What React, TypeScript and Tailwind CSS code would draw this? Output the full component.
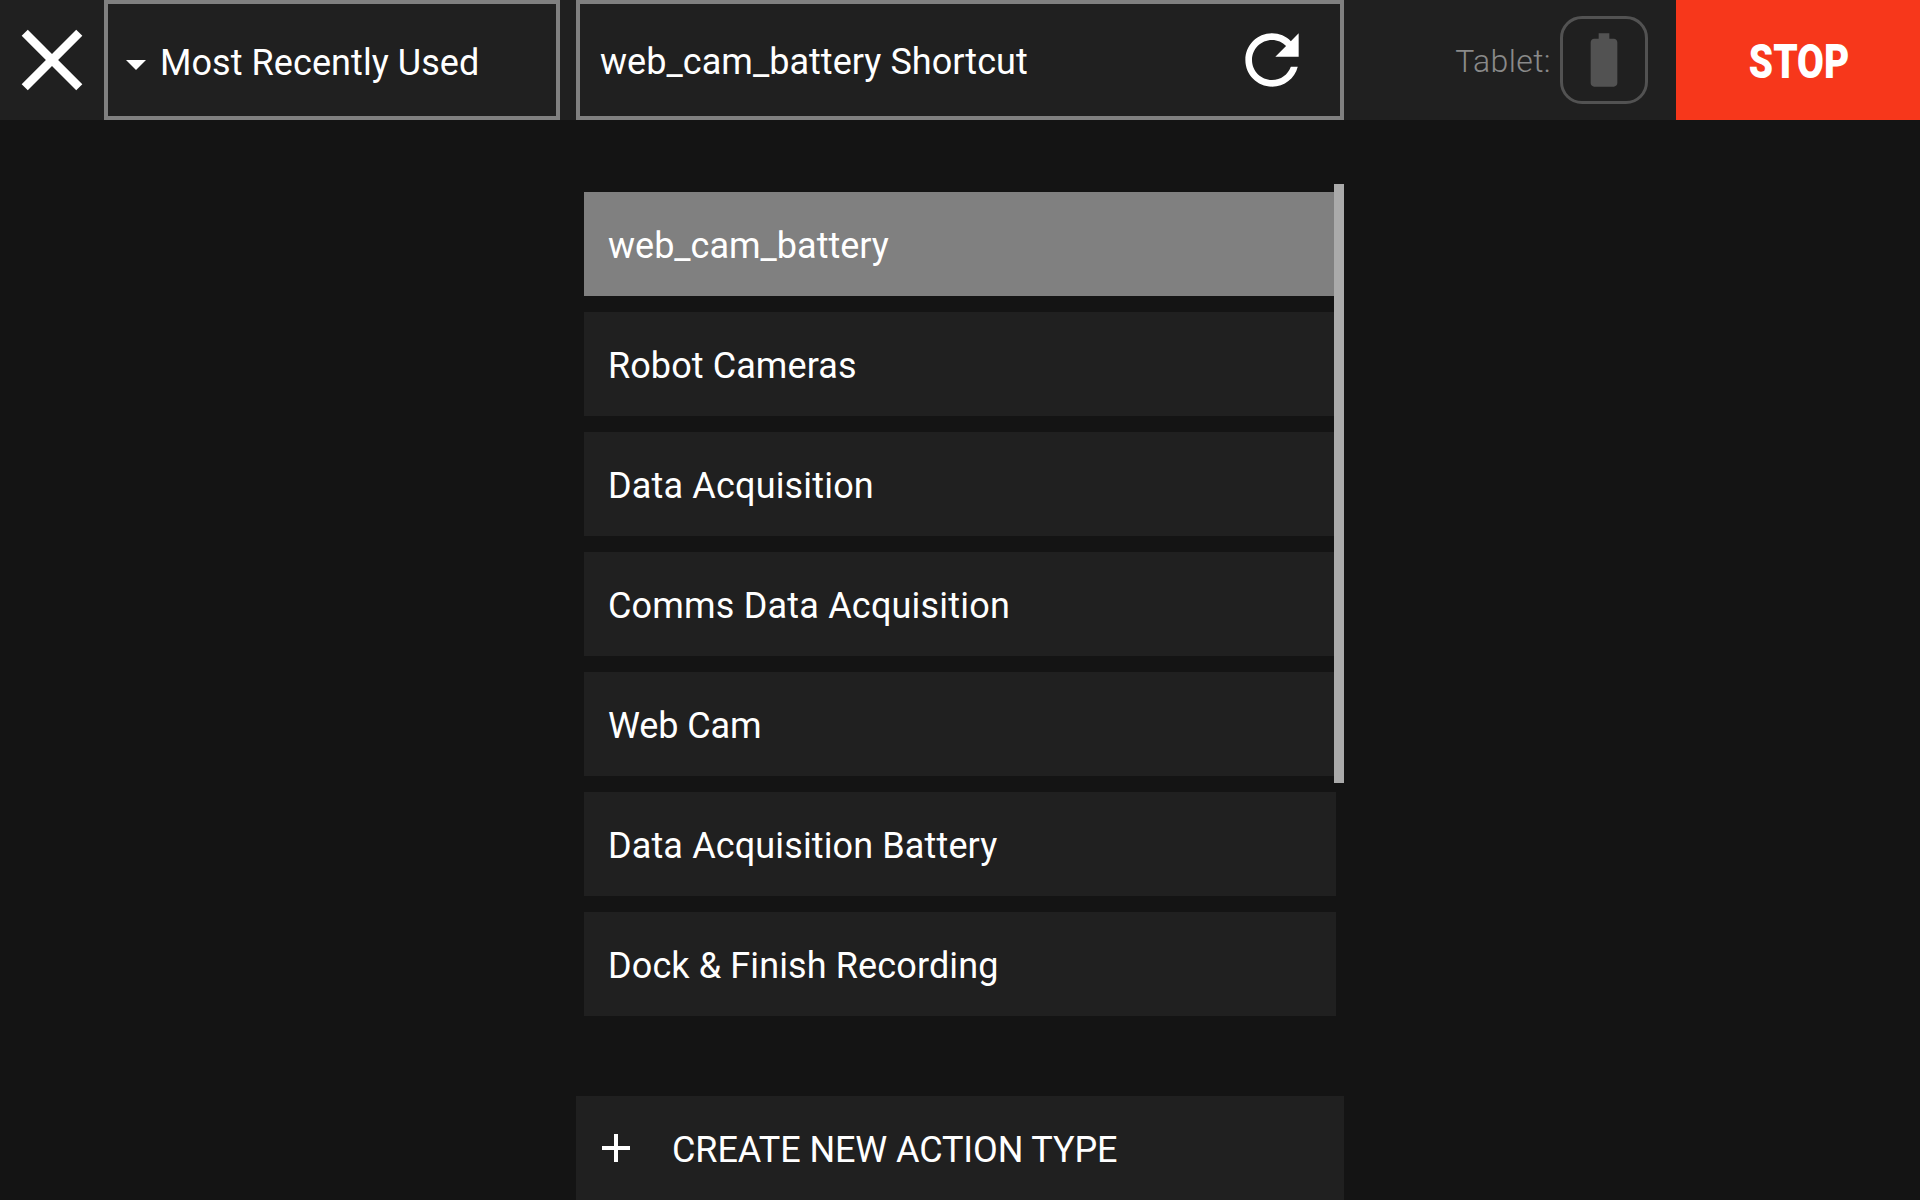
const actions = [
  { name: 'web_cam_battery', tracking: 'tracking-normal' },
  { name: 'Robot Cameras', tracking: 'tracking-[0.08px]' },
  { name: 'Data Acquisition', tracking: 'tracking-[0.17px]' },
  { name: 'Comms Data Acquisition', tracking: 'tracking-[0.19px]' },
  { name: 'Web Cam', tracking: 'tracking-[-0.1px]' },
  { name: 'Data Acquisition Battery', tracking: 'tracking-[0.13px]' },
  { name: 'Dock & Finish Recording', tracking: 'tracking-[0.12px]' },
];

function Icon({ d, className }: { d: string; className: string }) {
  return (
    <svg viewBox="0 0 24 24" fill="currentColor" className={className}>
      <path d={d} />
    </svg>
  );
}

function Header() {
  return (
    <header className="flex h-[120px] shrink-0 bg-[#202020]">
      <button className="flex w-[104px] items-center justify-center">
        <Icon
          className="size-[104px]"
          d="M19 6.41 17.59 5 12 10.59 6.41 5 5 6.41 10.59 12 5 17.59 6.41 19 12 13.41 17.59 19 19 17.59 13.41 12z"
        />
      </button>
      <button className="flex w-[456px] items-center border-4 border-[#808080] pl-1">
        <Icon className="mt-2 size-12" d="M7 10l5 5 5-5z" />
        <span className="mt-1.5 tracking-[0.07px] whitespace-nowrap">Most Recently Used</span>
      </button>
      <div className="ml-4 flex w-[768px] items-center justify-between border-4 border-[#808080] pr-7 pl-5">
        <span className="mt-1 tracking-[0.04px] whitespace-nowrap">web_cam_battery Shortcut</span>
        <Icon
          className="size-20"
          d="M17.65 6.35C16.2 4.9 14.21 4 12 4c-4.42 0-7.99 3.58-7.99 8s3.57 8 7.99 8c3.73 0 6.84-2.55 7.73-6h-2.08c-.82 2.33-3.04 4-5.65 4-3.31 0-6-2.69-6-6s2.69-6 6-6c1.66 0 3.14.69 4.22 1.78L13 11h7V4l-2.35 2.35z"
        />
      </div>
      <div className="flex flex-1 items-center justify-end pr-7">
        <span className="mt-0.5 mr-[9px] text-[32px] leading-10 font-light tracking-[0.4px] text-[#8a8a8a]">Tablet:</span>
        <div className="flex size-[88px] items-center justify-center rounded-[22px] border-3 border-[#525252] text-[#525252]">
          <Icon
            className="size-16"
            d="M15.67 4H14V2h-4v2H8.33C7.6 4 7 4.6 7 5.33v15.33C7 21.4 7.6 22 8.33 22h7.33c.74 0 1.34-.6 1.34-1.33V5.33C17 4.6 16.4 4 15.67 4z"
          />
        </div>
      </div>
      <button className="flex w-[244px] items-center justify-center bg-[#f7371b] pt-1 pl-0.5 text-[48px] leading-none font-black">
        <span className="scale-x-[0.81]">STOP</span>
      </button>
    </header>
  );
}

export default function App() {
  return (
    <div className="flex h-[1200px] w-[1920px] flex-col overflow-hidden bg-[#141414] font-['Roboto',sans-serif] text-[36px] leading-[42px] text-white">
      <Header />
      <main className="mx-auto flex w-[768px] flex-1 flex-col justify-between pt-16">
        <div className="relative flex flex-col gap-4 px-2 pt-2">
          {actions.map(({ name, tracking }, i) => (
            <div
              key={name}
              className={`flex h-[104px] items-center px-6 pt-1 ${i === 0 ? 'bg-[#808080]' : 'bg-[#202020]'}`}
            >
              <span className={tracking}>{name}</span>
            </div>
          ))}
          <div className="absolute top-0 right-0 h-[599px] w-2.5 bg-[#aaaaaa]" />
        </div>
        <button className="flex h-[104px] items-center bg-[#202020] pl-4">
          <Icon className="size-12" d="M19 13h-6v6h-2v-6H5v-2h6V5h2v6h6v2z" />
          <span className="mt-1 ml-8 tracking-[-0.11px]">CREATE NEW ACTION TYPE</span>
        </button>
      </main>
    </div>
  );
}
